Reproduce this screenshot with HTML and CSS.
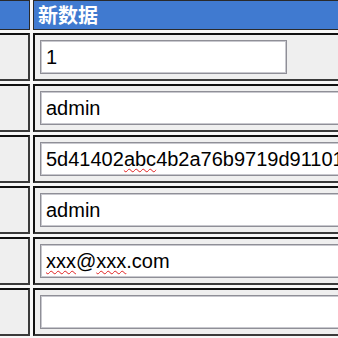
FILE: index.html
```html
<!DOCTYPE html>
<html>
<head>
<meta charset="utf-8">
<link rel="stylesheet" href="styles.css">
</head>
<body>
<table class="grid">
  <colgroup>
    <col class="col-lab">
    <col class="col-val">
  </colgroup>
  <tr>
    <th class="head"></th>
    <th class="head title">新数据</th>
  </tr>
  <tr>
    <td class="lab"></td>
    <td class="val"><div class="field short">1</div></td>
  </tr>
  <tr>
    <td class="lab"></td>
    <td class="val"><div class="field">admin</div></td>
  </tr>
  <tr>
    <td class="lab"></td>
    <td class="val"><div class="field">5d41402<span class="sp">abc</span>4b2a76b9719d911017c592</div></td>
  </tr>
  <tr>
    <td class="lab"></td>
    <td class="val"><div class="field">admin</div></td>
  </tr>
  <tr>
    <td class="lab"></td>
    <td class="val"><div class="field"><span class="sp">xxx</span>@<span class="sp">xxx</span>.com</div></td>
  </tr>
  <tr>
    <td class="lab"></td>
    <td class="val"><div class="field"></div></td>
  </tr>
</table>
</body>
</html>
```
FILE: styles.css
```css
html, body {
  margin: 0;
  padding: 0;
  overflow: hidden;
  background: #fafafa;
  width: 338px;
  height: 338px;
}

.grid {
  border-collapse: separate;
  border-spacing: 3px;
  margin: -3px 0 0 -20px;
  background: #f7f7f7;
  table-layout: fixed;
  width: 400px;
  min-width: 400px;
}

.col-lab {
  width: 47px;
}

.grid td, .grid th {
  padding: 0;
}

td.lab, td.val {
  background: #efefef;
  border-top: 2px solid #111;
  border-left: 2px solid #111;
  border-bottom: 2px solid #3a3a3a;
  border-right: 2px solid #3a3a3a;
}

td.val {
  padding: 5px;
}

.head {
  background: #407ad0;
  border: 1px solid #2a2a2a;
  height: 28px;
}

.title {
  color: #fff;
  font-family: "Noto Sans CJK SC", sans-serif;
  font-weight: bold;
  font-size: 20px;
  text-align: left;
  padding-left: 4px;
  line-height: 28px;
}

.grid th.title {
  padding-left: 4px;
}

.field {
  box-sizing: border-box;
  width: 330px;
  height: 34px;
  background: #fff;
  border: 1px solid #8f8f97;
  box-shadow: inset 0 0 0 1px #c8c8ce;
  font-family: "Liberation Sans", Arial, sans-serif;
  font-size: 20px;
  line-height: 32px;
  padding-left: 5px;
  color: #000;
  white-space: nowrap;
  overflow: hidden;
}

.field.short {
  width: 247px;
}

.sp {
  text-decoration: underline wavy #e02020;
  text-decoration-thickness: 1px;
  text-underline-offset: 2px;
}
```
